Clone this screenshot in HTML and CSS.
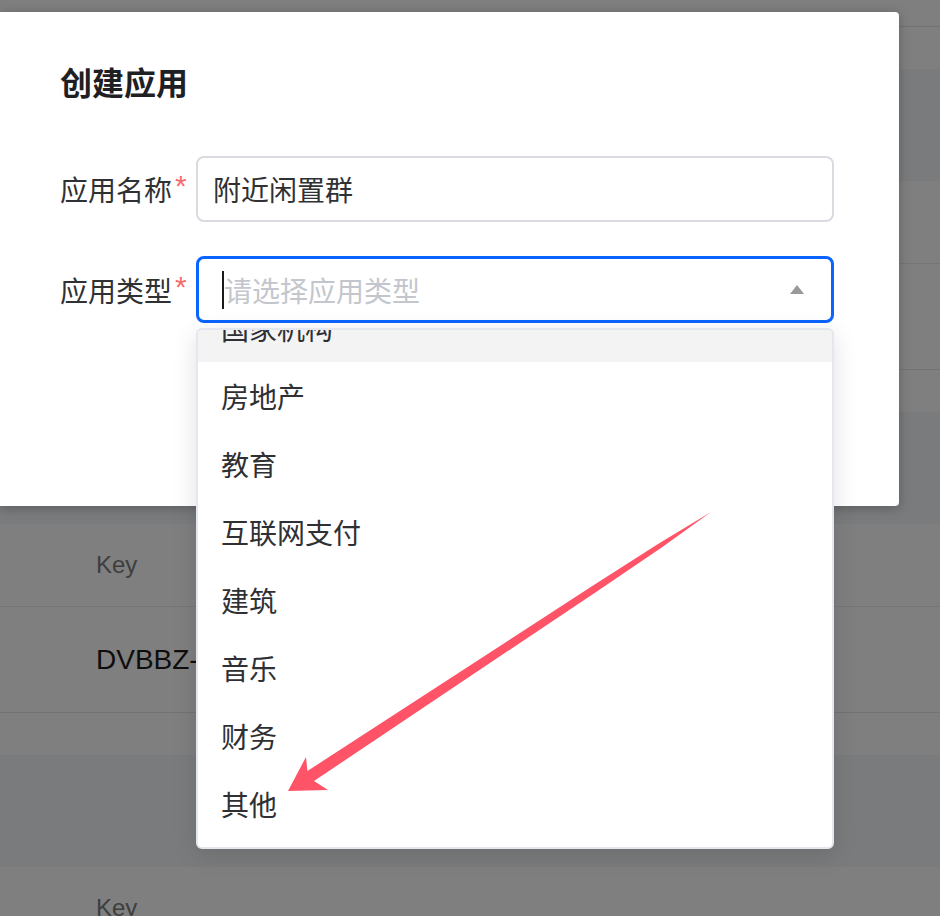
FILE: index.html
```html
<!DOCTYPE html>
<html lang="zh-CN">
<head>
<meta charset="utf-8">
<title>创建应用</title>
<link rel="stylesheet" href="styles.css">
</head>
<body>
  <main class="bg-list">
    <section class="card">
      <div class="card-head"></div>
      <div class="card-row"></div>
    </section>
    <section class="card">
      <div class="card-head"></div>
      <div class="card-row"></div>
    </section>
    <section class="card">
      <div class="card-head">Key</div>
      <div class="card-row">DVBBZ-ZKQ6Q</div>
    </section>
    <section class="card">
      <div class="card-head">Key</div>
      <div class="card-row"></div>
    </section>
  </main>

  <div class="mask"></div>

  <div class="dialog">
    <h2 class="dialog-title">创建应用</h2>
    <form class="form">
      <div class="form-row">
        <label class="form-label">应用名称<span class="req">*</span></label>
        <div class="input">附近闲置群</div>
      </div>
      <div class="form-row">
        <label class="form-label">应用类型<span class="req">*</span></label>
        <div class="select-wrap">
          <div class="select is-focus">
            <span class="caret"></span>
            <span class="placeholder">请选择应用类型</span>
            <span class="tri"></span>
          </div>
          <div class="dropdown">
            <ul class="options">
              <li class="option is-hover">国家机构</li>
              <li class="option">房地产</li>
              <li class="option">教育</li>
              <li class="option">互联网支付</li>
              <li class="option">建筑</li>
              <li class="option">音乐</li>
              <li class="option">财务</li>
              <li class="option">其他</li>
            </ul>
          </div>
        </div>
      </div>
    </form>
  </div>

  <svg class="annot" width="940" height="916" viewBox="0 0 940 916" aria-hidden="true">
    <polygon fill="#ff5368" points="288,791 306,757 307.4,771 592.3,586.1 659.6,542.9 711,512 662.4,547.1 596.1,591.9 314,781 328,790"/>
  </svg>
</body>
</html>
```

FILE: styles.css
```css
html, body {
  margin: 0;
  padding: 0;
}
body {
  width: 940px;
  height: 916px;
  overflow: hidden;
  background: #f5f6f9;
  font-family: "Noto Sans CJK SC", "Noto Sans", sans-serif;
  position: relative;
}

/* background page */
.bg-list {
  margin-top: -162px;
}
.card {
  background: #fff;
  padding-bottom: 42px;
  margin-bottom: 112px;
}
.card-head {
  box-sizing: border-box;
  height: 83px;
  border-bottom: 1px solid #eaecf1;
  display: flex;
  align-items: center;
  padding-left: 96px;
  font: 24px "Liberation Sans", Arial, sans-serif;
  color: #7c7c7c;
}
.card-row {
  box-sizing: border-box;
  height: 106px;
  border-bottom: 1px solid #e4e6ee;
  display: flex;
  align-items: center;
  padding-left: 96px;
  font: 28px "Liberation Sans", Arial, sans-serif;
  color: #1c1c1c;
  white-space: nowrap;
}

.mask {
  position: absolute;
  inset: 0;
  background: rgba(0, 0, 0, 0.5);
}

/* dialog */
.dialog {
  position: absolute;
  left: 0;
  top: 12px;
  width: 899px;
  height: 494px;
  box-sizing: border-box;
  background: #fff;
  border-radius: 0 4px 4px 0;
  box-shadow: 0 2px 12px rgba(0, 0, 0, 0.25);
  padding: 48px 0 0 60px;
}
.dialog-title {
  margin: 0;
  font-size: 32px;
  line-height: 42px;
  font-weight: 700;
  color: #1f2023;
}
.form {
  margin-top: 54px;
  display: flex;
  flex-direction: column;
  gap: 34px;
}
.form-row {
  display: flex;
  align-items: center;
}
.form-label {
  width: 136px;
  flex: none;
  display: flex;
  align-items: flex-start;
  font-size: 28px;
  line-height: 40px;
  color: #303133;
}
.req {
  font: 30px/30px "Liberation Sans", Arial, sans-serif;
  color: #f56c6c;
  margin: 2px 0 0 3px;
}
.input {
  box-sizing: border-box;
  width: 638px;
  height: 66px;
  border: 2px solid #d9dbe0;
  border-radius: 8px;
  padding-left: 15px;
  display: flex;
  align-items: center;
  font-size: 28px;
  color: #303133;
}
.select-wrap {
  position: relative;
  width: 638px;
}
.select {
  box-sizing: border-box;
  height: 67px;
  border: 3px solid #0a64ff;
  border-radius: 8px;
  padding: 0 27px 0 23px;
  display: flex;
  align-items: center;
  font-size: 28px;
}
.caret {
  width: 2px;
  height: 38px;
  background: #1a1a1a;
}
.placeholder {
  color: #c3c6cd;
  flex: 1;
}
.tri {
  width: 0;
  height: 0;
  border-left: 7px solid transparent;
  border-right: 7px solid transparent;
  border-bottom: 9px solid #999;
}

.dropdown {
  position: absolute;
  left: 0;
  top: 72px;
  width: 638px;
  height: 521px;
  box-sizing: border-box;
  background: #fff;
  border: 2px solid #e4e7ed;
  border-radius: 6px;
  box-shadow: 0 6px 24px rgba(0, 0, 0, 0.12);
  overflow: hidden;
}
.options {
  list-style: none;
  margin: -36px 0 0;
  padding: 0;
}
.option {
  height: 68px;
  display: flex;
  align-items: center;
  padding-left: 23px;
  font-size: 28px;
  color: #2f3033;
}
.option.is-hover {
  background: #f3f3f3;
}

.annot {
  position: absolute;
  left: 0;
  top: 0;
  pointer-events: none;
}
```
